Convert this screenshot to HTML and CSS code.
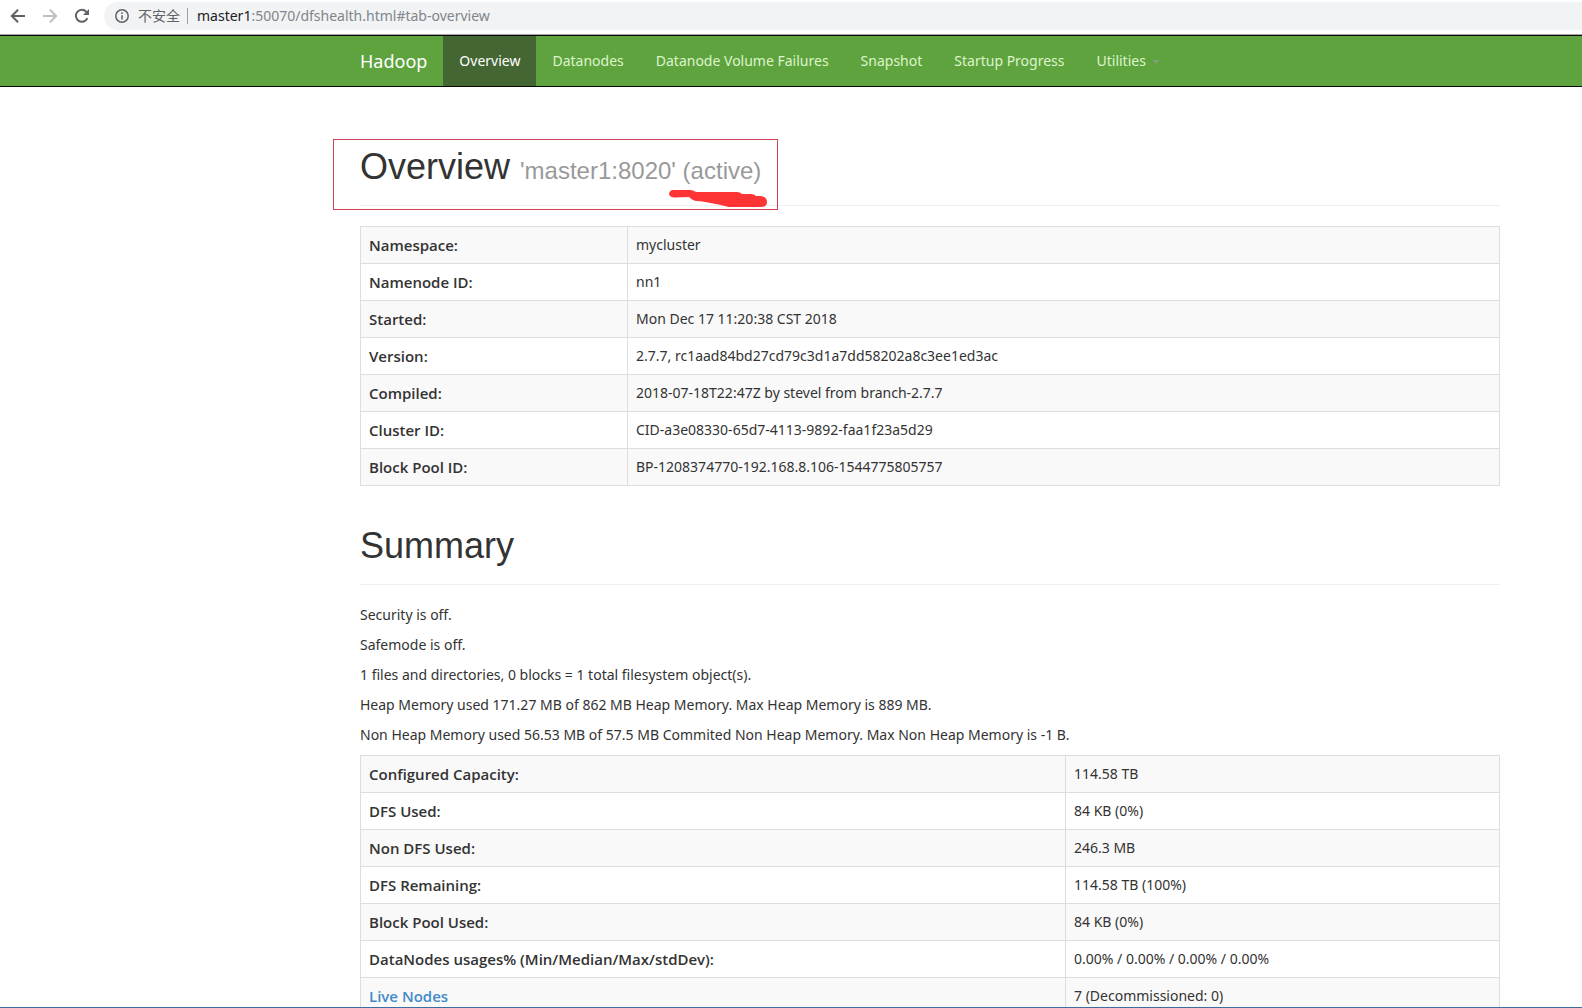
FILE: index.html
```html
<!DOCTYPE html>
<html lang="en">
  <head>
    <meta charset="UTF-8" />
    <meta name="viewport" content="width=device-width, initial-scale=1.0" />
    <title>Namenode information</title>
    <link rel="stylesheet" href="styles.css">
  </head>
  <body>
    <div class="toolbar">
      <button type="button" aria-label="Back">
        <svg width="16" height="16" viewBox="0 0 16 16"><path d="M15 8H2.5M8 1.8 1.8 8 8 14.2" /></svg>
      </button>
      <button type="button" class="disabled" aria-label="Forward" disabled>
        <svg width="16" height="16" viewBox="0 0 16 16"><path d="M1 8h12.5M8 1.8 14.2 8 8 14.2" /></svg>
      </button>
      <button type="button" aria-label="Reload">
        <svg width="16" height="16" viewBox="0 0 16 16"><path d="M13.4 10.2A6 6 0 1 1 12.4 3.8L14 5.4" /><path class="solid" d="M15 1v6H9z" /></svg>
      </button>
      <div class="address">
        <svg width="16" height="16" viewBox="0 0 16 16"><circle cx="8" cy="8" r="6.2" /><path d="M8 7.2v4.3M8 4.3v1.7" /></svg>
        <span class="insecure" lang="zh-CN">不安全</span>
        <span class="url"><b>master1</b>:50070/dfshealth.html#tab-overview</span>
      </div>
    </div>

    <nav class="navbar">
      <a class="brand" href="#">Hadoop</a>
      <ul>
        <li class="active"><a href="#tab-overview">Overview</a></li>
        <li><a href="#tab-datanode">Datanodes</a></li>
        <li><a href="#tab-datanode-volume-failures">Datanode Volume Failures</a></li>
        <li><a href="#tab-snapshot">Snapshot</a></li>
        <li><a href="#tab-startup-progress">Startup Progress</a></li>
        <li><a href="#">Utilities <span class="caret"></span></a></li>
      </ul>
    </nav>

    <main class="container">
      <div class="page-header">
        <h1>Overview <small>'master1:8020' (active)</small></h1>
        <div class="highlight"></div>
        <svg class="marker" width="98" height="18" viewBox="0 0 98 18">
          <path d="M4 0H21Q24 0 27 2L68 2Q71 2 73 4H82Q85 4 87 6H92Q98 7 98 12Q98 17 92 17H60Q55 16 52 15L36 12Q31 11 28 11Q24 11 20 7L5 7.500Q0 7 0 3.500Q1 0 4 0Z" />
        </svg>
      </div>

      <table class="overview">
        <tbody>
          <tr><th scope="row">Namespace:</th><td>mycluster</td></tr>
          <tr><th scope="row">Namenode ID:</th><td>nn1</td></tr>
          <tr><th scope="row">Started:</th><td>Mon Dec 17 11:20:38 CST 2018</td></tr>
          <tr><th scope="row">Version:</th><td>2.7.7, rc1aad84bd27cd79c3d1a7dd58202a8c3ee1ed3ac</td></tr>
          <tr><th scope="row">Compiled:</th><td>2018-07-18T22:47Z by stevel from branch-2.7.7</td></tr>
          <tr><th scope="row">Cluster ID:</th><td>CID-a3e08330-65d7-4113-9892-faa1f23a5d29</td></tr>
          <tr><th scope="row">Block Pool ID:</th><td>BP-1208374770-192.168.8.106-1544775805757</td></tr>
        </tbody>
      </table>

      <div class="page-header">
        <h1>Summary</h1>
      </div>
      <p>Security is off.</p>
      <p>Safemode is off.</p>
      <p>1 files and directories, 0 blocks = 1 total filesystem object(s).</p>
      <p>Heap Memory used 171.27 MB of 862 MB Heap Memory. Max Heap Memory is 889 MB.</p>
      <p>Non Heap Memory used 56.53 MB of 57.5 MB Commited Non Heap Memory. Max Non Heap Memory is -1 B.</p>

      <table class="summary">
        <tbody>
          <tr><th scope="row">Configured Capacity:</th><td>114.58 TB</td></tr>
          <tr><th scope="row">DFS Used:</th><td>84 KB (0%)</td></tr>
          <tr><th scope="row">Non DFS Used:</th><td>246.3 MB</td></tr>
          <tr><th scope="row">DFS Remaining:</th><td>114.58 TB (100%)</td></tr>
          <tr><th scope="row">Block Pool Used:</th><td>84 KB (0%)</td></tr>
          <tr><th scope="row">DataNodes usages% (Min/Median/Max/stdDev):</th><td>0.00% / 0.00% / 0.00% / 0.00%</td></tr>
          <tr><th scope="row"><a href="#tab-datanode">Live Nodes</a></th><td>7 (Decommissioned: 0)</td></tr>
        </tbody>
      </table>
    </main>
  </body>
</html>
```

FILE: styles.css
```css
* {
  box-sizing: border-box;
}

body {
  margin: 0;
  height: 100vh;
  display: flex;
  flex-direction: column;
  overflow: hidden;
  border-bottom: 1px solid #3c6f9f;
  background: #fff;
  color: #333;
  font-family: "Noto Sans", "Noto Sans CJK SC", sans-serif;
  font-size: 14px;
  line-height: 20px;
}

a {
  color: #428bca;
  text-decoration: none;
}

/* browser bar */
.toolbar {
  flex: none;
  display: flex;
  align-items: center;
  gap: 16px;
  height: 35px;
  padding: 0 0 3px 10px;
  border-bottom: 1px solid #a5a5a5;
}

.toolbar button {
  display: flex;
  padding: 0;
  border: 0;
  background: none;
}

.toolbar svg {
  fill: none;
  stroke: #5f6368;
  stroke-width: 2;
}

.toolbar .disabled svg {
  stroke: #bdbfc1;
}

.toolbar .solid {
  fill: #5f6368;
  stroke: none;
}

.address {
  flex: 1;
  display: flex;
  align-items: center;
  height: 28px;
  margin-left: -2px;
  padding-left: 10px;
  border-radius: 14px 0 0 14px;
  background: #f1f3f4;
  color: #80868b;
}

.address svg {
  stroke-width: 1.5;
}

.insecure {
  margin-left: 8px;
  padding-right: 7px;
  border-right: 1px solid #9aa0a6;
  color: #5f6368;
  line-height: 16px;
}

.url {
  margin-left: 9px;
}

.url b {
  color: #202124;
  font-weight: normal;
}

/* navbar */
.navbar {
  flex: none;
  display: flex;
  height: 52px;
  padding-left: 345px;
  border: solid #080808;
  border-width: 1px 0;
  background: #5fa33e;
  line-height: 50px;
}

.brand {
  padding: 0 16px 0 15px;
  color: #fff;
  font-size: 18px;
}

.navbar ul {
  display: flex;
  margin: 0;
  padding: 0;
  list-style: none;
}

.navbar li a {
  display: block;
  padding: 0 16px;
  color: #dcf5cc;
}

.navbar .active a {
  background: #446633;
  color: #fff;
}

.caret {
  display: inline-block;
  margin-left: 2px;
  border: 4px solid transparent;
  border-top-color: #7f9f78;
  border-bottom: 0;
  vertical-align: middle;
}

/* content */
.container {
  flex: 1;
  min-height: 0;
  overflow: hidden;
  padding: 60px 82px 0 360px;
}

.page-header {
  position: relative;
  margin: 40px 0 20px;
  padding-bottom: 8px;
  border-bottom: 1px solid #eee;
}

.page-header:first-child {
  margin-top: 0;
}

h1 {
  margin: 0 0 10px;
  font-family: "Liberation Sans", sans-serif;
  font-size: 36px;
  font-weight: 500;
  line-height: 40px;
}

h1 small {
  color: #999;
  font-size: 24px;
  font-weight: normal;
  line-height: 1;
}

.highlight {
  position: absolute;
  top: -8px;
  left: -27px;
  width: 445px;
  height: 71px;
  border: 1px solid #d04050;
}

.marker {
  position: absolute;
  top: 43px;
  left: 309px;
  fill: #ff3434;
}

p {
  margin: 0 0 10px;
}

table {
  width: 100%;
  border-collapse: collapse;
  table-layout: fixed;
}

th, td {
  height: 37px;
  padding: 8px;
  border: 1px solid #ddd;
  text-align: left;
}

th {
  font-family: "Open Sans", sans-serif;
  font-size: 15px;
  font-weight: 600;
}

tr:nth-child(odd) {
  background: #f9f9f9;
}

.overview th {
  width: 267px;
}

.summary th {
  width: 705px;
}
```
